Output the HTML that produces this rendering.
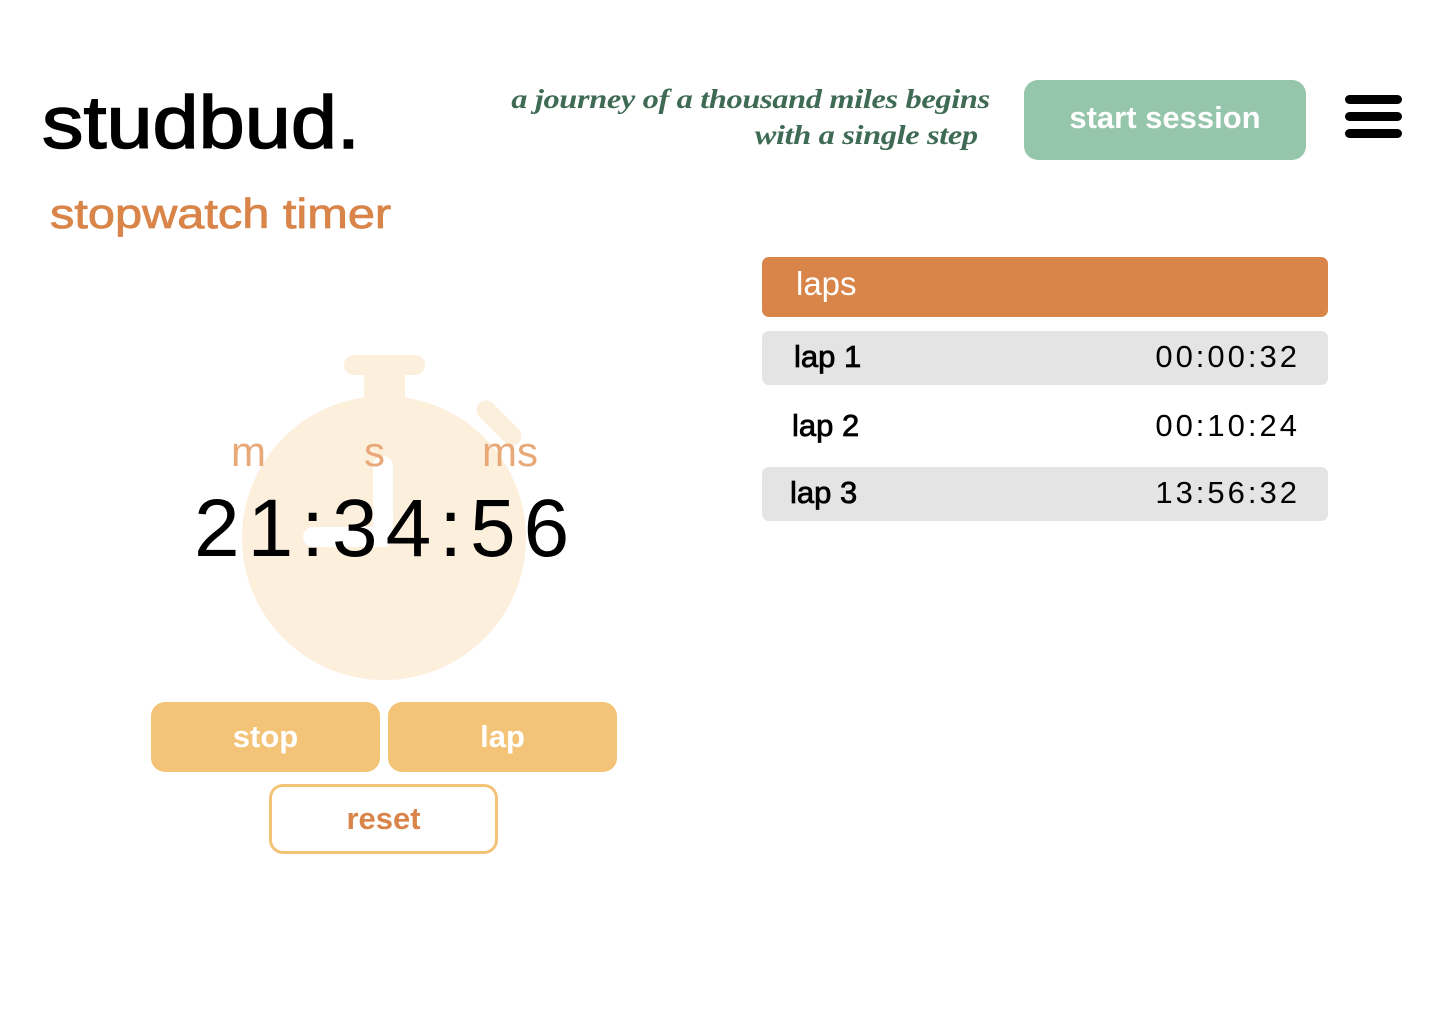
<!DOCTYPE html>
<html><head><style>
body{margin:0;width:1440px;height:1024px;background:#fff;position:relative;overflow:hidden;font-family:"Liberation Sans",sans-serif}
.a{position:absolute;white-space:nowrap}
.row{position:absolute;left:762px;width:566px;height:54px;border-radius:7px}
.row span{position:absolute;font-size:31px;top:8px}
.row .t{letter-spacing:3px;right:28px}
.row .l{-webkit-text-stroke:0.8px #000}
.btn{position:absolute;border-radius:14px;background:#f3c477;color:#fff;font-weight:bold;font-size:31px;text-align:center;line-height:70px;height:70px;width:229px;top:702px}
</style></head><body>
<div class="a" style="left:42px;top:80px;font-size:74px;color:#000;-webkit-text-stroke:1.5px #000;transform:scaleX(1.12);transform-origin:0 0">studbud.</div>
<div class="a" style="left:50px;top:190px;font-size:42px;color:#d9854a;-webkit-text-stroke:0.8px #d9854a;transform:scaleX(1.16);transform-origin:0 0">stopwatch timer</div>
<div class="a" style="right:450px;top:81px;text-align:right;font-family:'Liberation Serif',serif;font-style:italic;font-weight:bold;font-size:27px;line-height:36px;color:#3f6b55;letter-spacing:-0.3px;transform:scaleX(1.2);transform-origin:100% 0">a journey of a thousand miles begins<br><span style="padding-right:10px">with a single step</span></div>
<div class="a" style="left:1024px;top:80px;width:282px;height:80px;border-radius:14px;background:#95c5ab;color:#fff;font-weight:bold;font-size:31px;text-align:center;line-height:76px">start session</div>
<div class="a" style="left:1345px;top:95px;width:57px;height:9px;border-radius:5px;background:#000"></div>
<div class="a" style="left:1345px;top:112px;width:57px;height:9px;border-radius:5px;background:#000"></div>
<div class="a" style="left:1345px;top:129px;width:57px;height:9px;border-radius:5px;background:#000"></div>

<svg class="a" style="left:0;top:0" width="700" height="720">
<g fill="#fcefdc" stroke="none">
<circle cx="384" cy="538" r="142"/>
<rect x="344" y="355" width="81" height="20" rx="10"/>
<rect x="364" y="370" width="41" height="32"/>
</g>
<line x1="486" y1="410" x2="512" y2="436" stroke="#fcefdc" stroke-width="19" stroke-linecap="round"/>
<path d="M383 466 V537 H313" fill="none" stroke="#fff" stroke-width="20" stroke-linecap="round" stroke-linejoin="round"/>
</svg>
<div class="a" style="left:231px;top:428px;font-size:42px;color:#e8a878">m</div>
<div class="a" style="left:364px;top:428px;font-size:42px;color:#e8a878">s</div>
<div class="a" style="left:482px;top:428px;font-size:42px;color:#e8a878">ms</div>
<div class="a" style="left:194px;top:482px;font-size:82px;color:#000;letter-spacing:8px;font-weight:300">21:34:56</div>

<div class="btn" style="left:151px">stop</div>
<div class="btn" style="left:388px">lap</div>
<div class="a" style="left:269px;top:784px;width:223px;height:64px;border:3px solid #f3c477;border-radius:14px;color:#d9854a;font-weight:bold;font-size:31px;text-align:center;line-height:64px">reset</div>

<div class="row" style="top:257px;height:60px;background:#d9854a"><span style="left:34px;top:8px;color:#fff;font-size:33px">laps</span></div>
<div class="row" style="top:331px;background:#e4e4e4"><span class="l" style="left:32px">lap 1</span><span class="t">00:00:32</span></div>
<div class="row" style="top:400px"><span class="l" style="left:30px">lap 2</span><span class="t">00:10:24</span></div>
<div class="row" style="top:467px;background:#e4e4e4"><span class="l" style="left:28px">lap 3</span><span class="t">13:56:32</span></div>
</body></html>
